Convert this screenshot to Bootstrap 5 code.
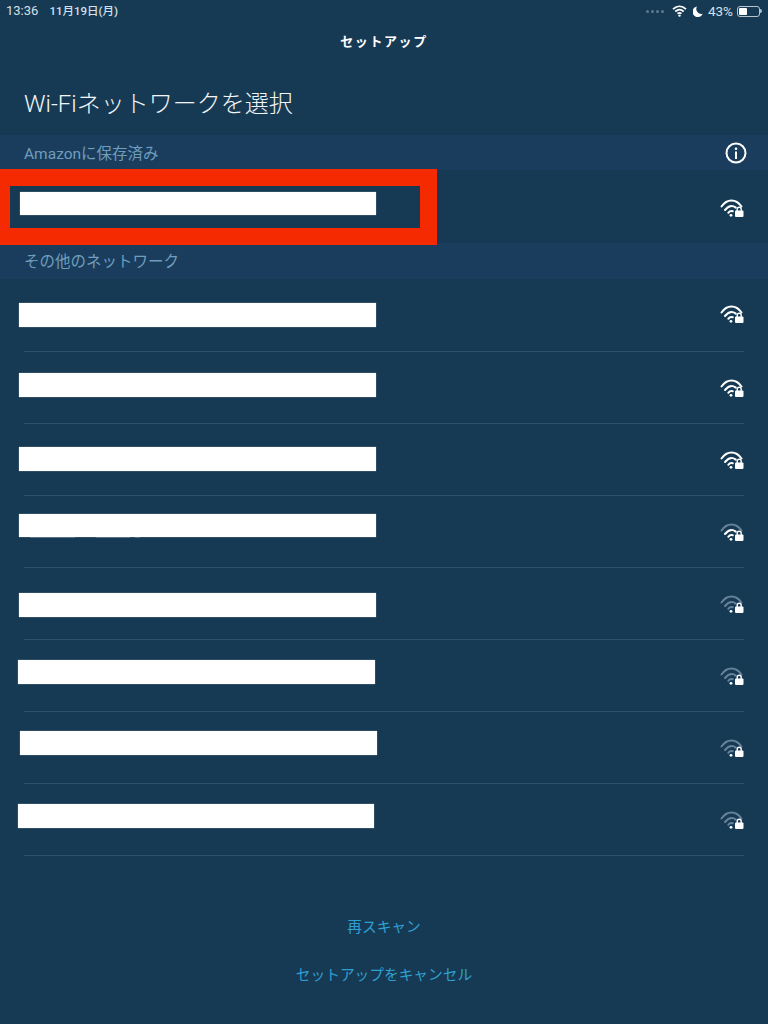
<!DOCTYPE html>
<html lang="ja">
<head>
<meta charset="utf-8">
<title>Wi-Fiネットワークを選択</title>
<link href="https://cdn.jsdelivr.net/npm/bootstrap@5.3.0/dist/css/bootstrap.min.css" rel="stylesheet">
<style>
  html, body { height: 100%; }
  body { background: #173a54; color: #fff; font-family: Roboto, "Noto Sans CJK JP", sans-serif; overflow: hidden; }
  .status-strip { height: 22px; padding: 0 6px; font-size: 13px; color: #d5e0e8; line-height: 22px; }
  .status-date { margin-left: 11px; font-size: 11.5px; font-weight: 500; }
  .signal-dots { gap: 2px; margin-right: 8px; }
  .signal-dots i { width: 3px; height: 3px; border-radius: 50%; background: #5d7a90; display: block; }
  .status-wifi { margin-right: 6px; }
  .status-moon { margin-right: 5px; }
  .status-pct { font-size: 13.5px; }
  .batt-shell { width: 23px; height: 11px; border: 1px solid #b6c5d0; border-radius: 3px; padding: 1px; margin-left: 4px; }
  .batt-level { width: 43%; height: 100%; background: #fff; border-radius: 1px; }
  .batt-tip { width: 2px; height: 4px; background: #b6c5d0; border-radius: 0 2px 2px 0; }
  .setup-title { height: 40px; font-size: 13px; font-weight: 700; letter-spacing: 1.6px; line-height: 40px; text-align: center; }
  .page-heading { height: 73px; padding: 24px 24px 0; font-size: 24px; font-weight: 300; line-height: 36px; margin: 0; color: #f1f5f8; }
  .band { height: 35px; background: #1a3d5e; padding: 4px 21px 0 24px; font-size: 15.5px; color: #6f9dbb; }
  .band-second { height: 36px; }
  .info-glyph { margin-top: -4px; }
  .net-row { height: 72px; position: relative; padding: 0 24px; }
  .net-row-ruled::after { content: ""; position: absolute; left: 24px; right: 24px; bottom: -1px; height: 1px; background: #2c506d; }
  .saved-row { height: 73px; }
  .redact { position: absolute; height: 24px; width: 357px; background: #fff; box-shadow: 0 0 1px #9fb4c4; }
  .redact-0 { left: 20px; top: 22px; width: 356px; height: 23px; }
  .redact-1 { left: 19px; top: 24px; }
  .redact-2 { left: 19px; top: 22px; }
  .redact-3 { left: 19px; top: 24px; }
  .redact-4 { left: 19px; top: 19px; height: 23px; }
  .redact-5 { left: 19px; top: 26px; }
  .redact-6 { left: 18px; top: 21px; }
  .redact-7 { left: 20px; top: 20px; }
  .redact-8 { left: 18px; top: 21px; width: 356px; }
  .text-remnant { position: absolute; left: 30px; top: 42px; width: 110px; height: 1px; background: linear-gradient(90deg, #8fa6b8 0 45px, transparent 45px 66px, #8fa6b8 66px 100px, transparent 100px 105px, #8fa6b8 105px); opacity: .4; }
  .red-frame { position: absolute; left: 0; top: -1px; width: 437px; height: 76px; border: solid #f52a00; border-width: 17px 17px 17px 10px; pointer-events: none; }
  .wifi-icon { width: 24px; height: 18px; display: block; margin-top: 2px; }
  .wifi-icon-high { margin-top: -2px; }
  .wifi-mark { fill: none; stroke: #fff; stroke-width: 2; stroke-linecap: round; }
  .wifi-fill { fill: #fff; }
  .arc-dim { stroke: #668298; }
  .foot-actions { padding-top: 60px; gap: 24px; }
  .foot-link { color: #2f9fd2; font-size: 14.7px; line-height: 24px; text-decoration: none; }
</style>
</head>
<body>
  <div class="status-strip d-flex align-items-center">
    <span>13:36</span><span class="status-date">11月19日(月)</span>
    <div class="ms-auto d-flex align-items-center">
      <div class="signal-dots d-flex"><i></i><i></i><i></i><i></i></div>
      <svg width="15" height="12" viewBox="0 0 15 12" class="status-wifi"><path d="M1 4.2C5 .4 10 .4 14 4.2M3.3 6.5C5.8 4.2 9.2 4.2 11.7 6.5M5.5 8.7C6.7 7.7 8.3 7.7 9.5 8.7" fill="none" stroke="#fff" stroke-width="1.7"/><circle cx="7.5" cy="10.6" r="1.2" fill="#fff"/></svg>
      <svg width="10" height="11" viewBox="0 0 10 11" class="status-moon"><path d="M4 .5A5.3 5.3 0 1 0 9.7 7.8 5 5 0 0 1 4 .5Z" fill="#fff"/></svg>
      <span class="status-pct">43%</span>
      <div class="batt-shell"><div class="batt-level"></div></div><div class="batt-tip"></div>
    </div>
  </div>

  <div class="setup-title">セットアップ</div>
  <h1 class="page-heading">Wi-Fiネットワークを選択</h1>

  <div class="band d-flex align-items-center justify-content-between">
    <span>Amazonに保存済み</span>
    <svg width="22" height="22" viewBox="0 0 22 22" class="info-glyph"><circle cx="11" cy="11" r="9.5" fill="none" stroke="#fff" stroke-width="2"/><circle cx="11" cy="6.7" r="1.3" fill="#fff"/><rect x="10" y="9.5" width="2" height="7.5" fill="#fff"/></svg>
  </div>

  <div class="net-row saved-row d-flex align-items-center justify-content-end">
    <svg class="wifi-icon" viewBox="0 0 24 18"><g class="wifi-mark"><path d="M1.5 7.5C7 -.5 16 -.5 21.5 7.5"/><path d="M5 11C8.5 6.8 12.5 6.2 15.8 8.6"/><path d="M8.3 13.8C9.6 12 11 11.6 12.8 12.2"/></g><g class="wifi-fill"><circle cx="11" cy="16.3" r="1.4"/><rect x="15" y="11.5" width="8.5" height="6.5" rx="1"/></g><path d="M17.2 12V10.2a2 2 0 0 1 4 0V12" fill="none" stroke="#fff" stroke-width="1.4"/></svg>
    <div class="redact redact-0"></div>
    <div class="red-frame"></div>
  </div>

  <div class="band band-second d-flex align-items-center"><span>その他のネットワーク</span></div>

  <div class="net-row net-row-ruled d-flex align-items-center justify-content-end">
    <svg class="wifi-icon wifi-icon-high" viewBox="0 0 24 18"><g class="wifi-mark"><path d="M1.5 7.5C7 -.5 16 -.5 21.5 7.5"/><path d="M5 11C8.5 6.8 12.5 6.2 15.8 8.6"/><path d="M8.3 13.8C9.6 12 11 11.6 12.8 12.2"/></g><g class="wifi-fill"><circle cx="11" cy="16.3" r="1.4"/><rect x="15" y="11.5" width="8.5" height="6.5" rx="1"/></g><path d="M17.2 12V10.2a2 2 0 0 1 4 0V12" fill="none" stroke="#fff" stroke-width="1.4"/></svg>
    <div class="redact redact-1"></div>
  </div>
  <div class="net-row net-row-ruled d-flex align-items-center justify-content-end">
    <svg class="wifi-icon" viewBox="0 0 24 18"><g class="wifi-mark"><path d="M1.5 7.5C7 -.5 16 -.5 21.5 7.5"/><path d="M5 11C8.5 6.8 12.5 6.2 15.8 8.6"/><path d="M8.3 13.8C9.6 12 11 11.6 12.8 12.2"/></g><g class="wifi-fill"><circle cx="11" cy="16.3" r="1.4"/><rect x="15" y="11.5" width="8.5" height="6.5" rx="1"/></g><path d="M17.2 12V10.2a2 2 0 0 1 4 0V12" fill="none" stroke="#fff" stroke-width="1.4"/></svg>
    <div class="redact redact-2"></div>
  </div>
  <div class="net-row net-row-ruled d-flex align-items-center justify-content-end">
    <svg class="wifi-icon" viewBox="0 0 24 18"><g class="wifi-mark"><path d="M1.5 7.5C7 -.5 16 -.5 21.5 7.5"/><path d="M5 11C8.5 6.8 12.5 6.2 15.8 8.6"/><path d="M8.3 13.8C9.6 12 11 11.6 12.8 12.2"/></g><g class="wifi-fill"><circle cx="11" cy="16.3" r="1.4"/><rect x="15" y="11.5" width="8.5" height="6.5" rx="1"/></g><path d="M17.2 12V10.2a2 2 0 0 1 4 0V12" fill="none" stroke="#fff" stroke-width="1.4"/></svg>
    <div class="redact redact-3"></div>
  </div>
  <div class="net-row net-row-ruled d-flex align-items-center justify-content-end">
    <svg class="wifi-icon" viewBox="0 0 24 18"><g class="wifi-mark"><path class="arc-dim" d="M1.5 7.5C7 -.5 16 -.5 21.5 7.5"/><path d="M5 11C8.5 6.8 12.5 6.2 15.8 8.6"/><path d="M8.3 13.8C9.6 12 11 11.6 12.8 12.2"/></g><g class="wifi-fill"><circle cx="11" cy="16.3" r="1.4"/><rect x="15" y="11.5" width="8.5" height="6.5" rx="1"/></g><path d="M17.2 12V10.2a2 2 0 0 1 4 0V12" fill="none" stroke="#fff" stroke-width="1.4"/></svg>
    <div class="text-remnant"></div>
    <div class="redact redact-4"></div>
  </div>
  <div class="net-row net-row-ruled d-flex align-items-center justify-content-end">
    <svg class="wifi-icon" viewBox="0 0 24 18"><g class="wifi-mark arc-dim"><path d="M1.5 7.5C7 -.5 16 -.5 21.5 7.5"/><path d="M5 11C8.5 6.8 12.5 6.2 15.8 8.6"/><path d="M8.3 13.8C9.6 12 11 11.6 12.8 12.2"/></g><g class="wifi-fill"><circle cx="11" cy="16.3" r="1.4"/><rect x="15" y="11.5" width="8.5" height="6.5" rx="1"/></g><path d="M17.2 12V10.2a2 2 0 0 1 4 0V12" fill="none" stroke="#fff" stroke-width="1.4"/></svg>
    <div class="redact redact-5"></div>
  </div>
  <div class="net-row net-row-ruled d-flex align-items-center justify-content-end">
    <svg class="wifi-icon" viewBox="0 0 24 18"><g class="wifi-mark arc-dim"><path d="M1.5 7.5C7 -.5 16 -.5 21.5 7.5"/><path d="M5 11C8.5 6.8 12.5 6.2 15.8 8.6"/><path d="M8.3 13.8C9.6 12 11 11.6 12.8 12.2"/></g><g class="wifi-fill"><circle cx="11" cy="16.3" r="1.4"/><rect x="15" y="11.5" width="8.5" height="6.5" rx="1"/></g><path d="M17.2 12V10.2a2 2 0 0 1 4 0V12" fill="none" stroke="#fff" stroke-width="1.4"/></svg>
    <div class="redact redact-6"></div>
  </div>
  <div class="net-row net-row-ruled d-flex align-items-center justify-content-end">
    <svg class="wifi-icon" viewBox="0 0 24 18"><g class="wifi-mark arc-dim"><path d="M1.5 7.5C7 -.5 16 -.5 21.5 7.5"/><path d="M5 11C8.5 6.8 12.5 6.2 15.8 8.6"/><path d="M8.3 13.8C9.6 12 11 11.6 12.8 12.2"/></g><g class="wifi-fill"><circle cx="11" cy="16.3" r="1.4"/><rect x="15" y="11.5" width="8.5" height="6.5" rx="1"/></g><path d="M17.2 12V10.2a2 2 0 0 1 4 0V12" fill="none" stroke="#fff" stroke-width="1.4"/></svg>
    <div class="redact redact-7"></div>
  </div>
  <div class="net-row net-row-ruled d-flex align-items-center justify-content-end">
    <svg class="wifi-icon" viewBox="0 0 24 18"><g class="wifi-mark arc-dim"><path d="M1.5 7.5C7 -.5 16 -.5 21.5 7.5"/><path d="M5 11C8.5 6.8 12.5 6.2 15.8 8.6"/><path d="M8.3 13.8C9.6 12 11 11.6 12.8 12.2"/></g><g class="wifi-fill"><circle cx="11" cy="16.3" r="1.4"/><rect x="15" y="11.5" width="8.5" height="6.5" rx="1"/></g><path d="M17.2 12V10.2a2 2 0 0 1 4 0V12" fill="none" stroke="#fff" stroke-width="1.4"/></svg>
    <div class="redact redact-8"></div>
  </div>

  <div class="foot-actions d-flex flex-column align-items-center">
    <a class="foot-link" href="#">再スキャン</a>
    <a class="foot-link" href="#">セットアップをキャンセル</a>
  </div>
</body>
</html>
